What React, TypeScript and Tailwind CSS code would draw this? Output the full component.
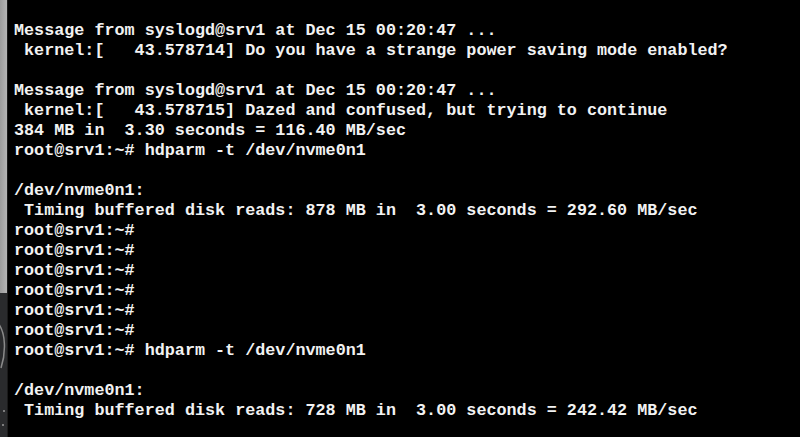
import React from "react";

const lines = [
  "Message from syslogd@srv1 at Dec 15 00:20:47 ...",
  " kernel:[   43.578714] Do you have a strange power saving mode enabled?",
  "",
  "Message from syslogd@srv1 at Dec 15 00:20:47 ...",
  " kernel:[   43.578715] Dazed and confused, but trying to continue",
  "384 MB in  3.30 seconds = 116.40 MB/sec",
  "root@srv1:~# hdparm -t /dev/nvme0n1",
  "",
  "/dev/nvme0n1:",
  " Timing buffered disk reads: 878 MB in  3.00 seconds = 292.60 MB/sec",
  "root@srv1:~# ",
  "root@srv1:~# ",
  "root@srv1:~# ",
  "root@srv1:~# ",
  "root@srv1:~# ",
  "root@srv1:~# ",
  "root@srv1:~# hdparm -t /dev/nvme0n1",
  "",
  "/dev/nvme0n1:",
  " Timing buffered disk reads: 728 MB in  3.00 seconds = 242.42 MB/sec",
];

export default function App() {
  return (
    <div className="flex h-[437px] w-[800px] overflow-hidden bg-black">
      <div className="flex w-[7px] flex-col">
        <div className="h-[293px] bg-gradient-to-r from-[#9c9c9c] to-[#b4b4b4]" />
        <div className="relative flex-1 bg-[#2a2b2d]">
          <svg width="7" height="144" viewBox="0 0 7 144" className="absolute left-0 top-0">
            <path d="M-2 30 C 6 40, 6 60, 1 75" stroke="#8a8a8a" strokeWidth="1.5" fill="none" />
            <circle cx="4" cy="118" r="1" fill="#9a9a9a" />
            <circle cx="3" cy="132" r="1" fill="#9a9a9a" />
          </svg>
        </div>
      </div>
      <div className="w-px bg-[#1a1a1a]" />
      <div
        className="flex-1 bg-black pl-[6px] pt-[21px] text-[16.75px] leading-[20px] text-[#f2f2f2] font-bold"
        style={{ fontFamily: '"Liberation Mono", "Courier New", monospace' }}
      >
        {lines.map((l, i) => (
          <div key={i} className="h-[20px] whitespace-pre">
            {l}
          </div>
        ))}
      </div>
    </div>
  );
}
